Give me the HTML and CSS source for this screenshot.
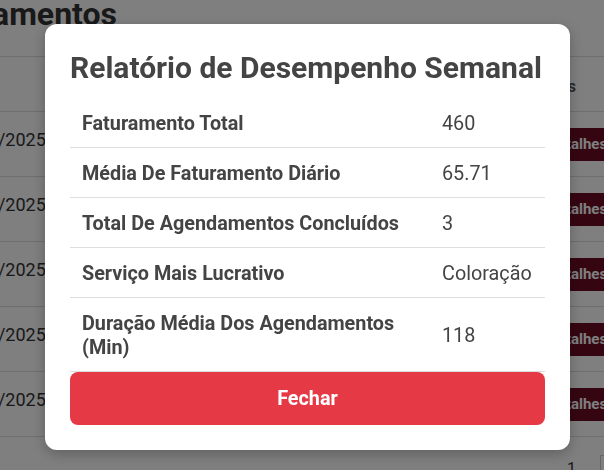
FILE: index.html
```html
<!DOCTYPE html>
<html lang="pt-BR">
<head>
<meta charset="utf-8">
<title>Relatório de Desempenho Semanal</title>
<link rel="stylesheet" href="styles.css">
</head>
<body>
<div class="page">
  <h1 class="page-title">Agendamentos</h1>
  <table class="list">
    <thead>
      <tr><th>Data</th><th>Cliente</th><th>Serviço</th><th>Status</th><th class="col-act">Ações</th></tr>
    </thead>
    <tbody>
      <tr><td>12/05/2025</td><td></td><td></td><td></td><td class="col-act"><span class="btn-det">Detalhes</span></td></tr>
      <tr><td>13/05/2025</td><td></td><td></td><td></td><td class="col-act"><span class="btn-det">Detalhes</span></td></tr>
      <tr><td>14/05/2025</td><td></td><td></td><td></td><td class="col-act"><span class="btn-det">Detalhes</span></td></tr>
      <tr><td>15/05/2025</td><td></td><td></td><td></td><td class="col-act"><span class="btn-det">Detalhes</span></td></tr>
      <tr><td>16/05/2025</td><td></td><td></td><td></td><td class="col-act"><span class="btn-det">Detalhes</span></td></tr>
    </tbody>
  </table>
  <div class="pager"><span>1</span><span class="pg-box">2</span></div>
</div>

<div class="overlay">
  <div class="modal">
    <h2 class="modal-title">Relatório de Desempenho Semanal</h2>
    <table class="report">
      <colgroup><col class="c-label"><col></colgroup>
      <tbody>
        <tr><th>Faturamento Total</th><td>460</td></tr>
        <tr><th>Média De Faturamento Diário</th><td>65.71</td></tr>
        <tr><th>Total De Agendamentos Concluídos</th><td>3</td></tr>
        <tr><th>Serviço Mais Lucrativo</th><td>Coloração</td></tr>
        <tr><th>Duração Média Dos Agendamentos (Min)</th><td>118</td></tr>
      </tbody>
    </table>
    <button class="btn-close" type="button">Fechar</button>
  </div>
</div>
</body>
</html>
```

FILE: styles.css
```css
* { box-sizing: border-box; }
html, body { margin: 0; padding: 0; }
body {
  font-family: Roboto, "Noto Sans", Arial, sans-serif;
  background: #fff;
  color: #333;
  overflow: hidden;
  width: 604px;
  height: 470px;
}
.page {
  margin-left: -86px;
  width: 720px;
}
.page-title {
  margin: 0 0 0 -15px;
  font-size: 32px;
  font-weight: 700;
  line-height: 28px;
  height: 56px;
  color: #333;
}
.list {
  width: 720px;
  border-collapse: collapse;
  border-top: 1px solid #ddd;
}
.list th {
  height: 55px;
  text-align: left;
  font-size: 16px;
  color: #555;
  font-weight: 700;
  padding: 0 8px;
  border-bottom: 1px solid #ddd;
}
.list td {
  height: 65px;
  font-size: 18px;
  padding: 0 0 10px 36px;
  border-bottom: 1px solid #ddd;
  color: #333;
}
.list th:first-child { padding-left: 36px; }
.list .col-act { padding-left: 0; width: 103px; }
.list th.col-act { padding: 4px 0 0 0; text-align: left; }
.btn-det {
  display: inline-block;
  background: #6b0c22;
  color: #fff;
  font-weight: 700;
  font-size: 15px;
  padding: 8px 10px;
  line-height: 17px;
  margin: 10px 0 0 7px;
}
.pager {
  display: flex;
  justify-content: flex-end;
  align-items: flex-start;
  gap: 24px;
  padding: 22px 0 0 0;
  margin-right: 7px;
  font-size: 16px;
  color: #333;
}
.pg-box {
  border: 1px solid #ccc;
  padding: 4px 8px;
  margin-top: -4px;
}

.overlay {
  position: fixed;
  inset: 0;
  background: rgba(0, 0, 0, 0.5);
  display: flex;
  align-items: flex-start;
  padding: 24px 0 0 45px;
}
.modal {
  width: 525px;
  background: #fff;
  border-radius: 12px;
  padding: 20px 25px 25px;
  box-shadow: 0 4px 14px rgba(0, 0, 0, 0.25);
}
.modal-title {
  margin: 0 0 6px;
  font-size: 30px;
  line-height: 48px;
  font-weight: 700;
  color: #444;
}
.report {
  width: 100%;
  border-collapse: collapse;
  table-layout: fixed;
}
.report .c-label { width: 360px; }
.report th,
.report td {
  padding: 14px 12px 11px;
  font-size: 19.8px;
  line-height: 24px;
  color: #444;
  text-align: left;
  vertical-align: middle;
  border-bottom: 1px solid #ddd;
}
.report th { font-weight: 700; }
.report td { font-weight: 400; }
.btn-close {
  display: block;
  width: 100%;
  height: 53px;
  border: 0;
  border-radius: 8px;
  background: #e63946;
  color: #fff;
  font-family: inherit;
  font-size: 19.8px;
  font-weight: 700;
}
```
